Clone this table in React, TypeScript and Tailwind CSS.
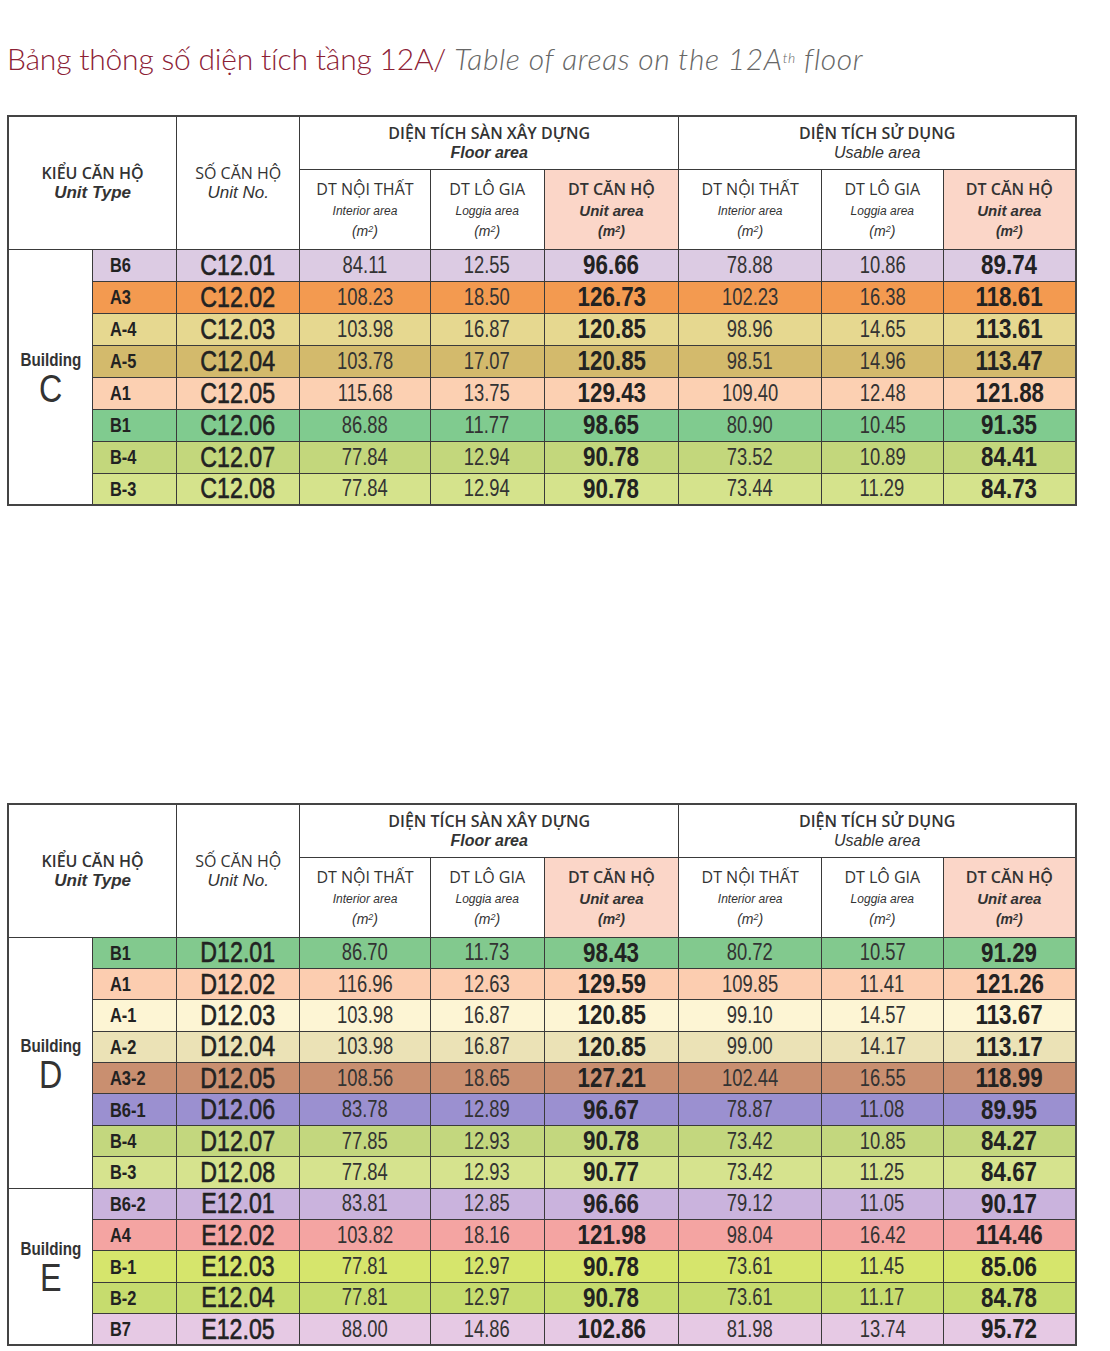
import React from "react";

type Row = {
  type: string;
  no: string;
  vals: [string, string, string, string, string, string];
  bg: string;
};

type Group = { name: string; letter: string; rows: Row[] };

// condensed look: no narrow face is installed, so Liberation Sans is squeezed
const lib = "[font-family:'Liberation_Sans','Arial',sans-serif]";
const head = "[font-family:'Open_Sans','Noto_Sans',sans-serif]";

const tableC: Group[] = [
  {
    name: "Building",
    letter: "C",
    rows: [
      { type: "B6", no: "C12.01", vals: ["84.11", "12.55", "96.66", "78.88", "10.86", "89.74"], bg: "bg-[#dccbe3]" },
      { type: "A3", no: "C12.02", vals: ["108.23", "18.50", "126.73", "102.23", "16.38", "118.61"], bg: "bg-[#f39a50]" },
      { type: "A-4", no: "C12.03", vals: ["103.98", "16.87", "120.85", "98.96", "14.65", "113.61"], bg: "bg-[#e6d890]" },
      { type: "A-5", no: "C12.04", vals: ["103.78", "17.07", "120.85", "98.51", "14.96", "113.47"], bg: "bg-[#d3ba6c]" },
      { type: "A1", no: "C12.05", vals: ["115.68", "13.75", "129.43", "109.40", "12.48", "121.88"], bg: "bg-[#fcd0b2]" },
      { type: "B1", no: "C12.06", vals: ["86.88", "11.77", "98.65", "80.90", "10.45", "91.35"], bg: "bg-[#80cb8f]" },
      { type: "B-4", no: "C12.07", vals: ["77.84", "12.94", "90.78", "73.52", "10.89", "84.41"], bg: "bg-[#c3d77c]" },
      { type: "B-3", no: "C12.08", vals: ["77.84", "12.94", "90.78", "73.44", "11.29", "84.73"], bg: "bg-[#d5e38c]" },
    ],
  },
];

const tableDE: Group[] = [
  {
    name: "Building",
    letter: "D",
    rows: [
      { type: "B1", no: "D12.01", vals: ["86.70", "11.73", "98.43", "80.72", "10.57", "91.29"], bg: "bg-[#82c98e]" },
      { type: "A1", no: "D12.02", vals: ["116.96", "12.63", "129.59", "109.85", "11.41", "121.26"], bg: "bg-[#fccdb0]" },
      { type: "A-1", no: "D12.03", vals: ["103.98", "16.87", "120.85", "99.10", "14.57", "113.67"], bg: "bg-[#fdf5d4]" },
      { type: "A-2", no: "D12.04", vals: ["103.98", "16.87", "120.85", "99.00", "14.17", "113.17"], bg: "bg-[#ebe2b6]" },
      { type: "A3-2", no: "D12.05", vals: ["108.56", "18.65", "127.21", "102.44", "16.55", "118.99"], bg: "bg-[#c98f70]" },
      { type: "B6-1", no: "D12.06", vals: ["83.78", "12.89", "96.67", "78.87", "11.08", "89.95"], bg: "bg-[#9b90d0]" },
      { type: "B-4", no: "D12.07", vals: ["77.85", "12.93", "90.78", "73.42", "10.85", "84.27"], bg: "bg-[#c3d77e]" },
      { type: "B-3", no: "D12.08", vals: ["77.84", "12.93", "90.77", "73.42", "11.25", "84.67"], bg: "bg-[#d6e38e]" },
    ],
  },
  {
    name: "Building",
    letter: "E",
    rows: [
      { type: "B6-2", no: "E12.01", vals: ["83.81", "12.85", "96.66", "79.12", "11.05", "90.17"], bg: "bg-[#cab3dd]" },
      { type: "A4", no: "E12.02", vals: ["103.82", "18.16", "121.98", "98.04", "16.42", "114.46"], bg: "bg-[#f4a4a2]" },
      { type: "B-1", no: "E12.03", vals: ["77.81", "12.97", "90.78", "73.61", "11.45", "85.06"], bg: "bg-[#d6e56c]" },
      { type: "B-2", no: "E12.04", vals: ["77.81", "12.97", "90.78", "73.61", "11.17", "84.78"], bg: "bg-[#c6dc6e]" },
      { type: "B7", no: "E12.05", vals: ["88.00", "14.86", "102.86", "81.98", "13.74", "95.72"], bg: "bg-[#e6c9e4]" },
    ],
  },
];

const cell = "border border-[#3a3a3a]";

function SubHead({ top, sub, pink }: { top: string; sub: string; pink?: boolean }) {
  return (
    <th className={`${cell} ${pink ? "bg-[#fbd6c8]" : "bg-white"} align-middle font-normal text-[#333]`}>
      <div className={`${head} text-[16px] leading-6 ${pink ? "font-semibold" : ""}`}>{top}</div>
      <div className={`${lib} italic leading-5 ${pink ? "text-[15px] font-bold" : "text-[12px]"}`}>{sub}</div>
      <div className={`${lib} italic text-[14px] leading-5 ${pink ? "font-bold" : ""}`}>
        (m<sup className="text-[9px]">2</sup>)
      </div>
    </th>
  );
}

function Sq({ children, className }: { children: React.ReactNode; className?: string }) {
  return <span className={`inline-block ${className ?? ""}`}>{children}</span>;
}

function AreaTable({ groups, rowH }: { groups: Group[]; rowH: string }) {
  return (
    <table className="w-[1070px] border-collapse border-2 border-[#444] text-[#222]">
      <colgroup>
        <col className="w-[85px]" />
        <col className="w-[84px]" />
        <col className="w-[123px]" />
        <col className="w-[131px]" />
        <col className="w-[114px]" />
        <col className="w-[135px]" />
        <col className="w-[143px]" />
        <col className="w-[122px]" />
        <col className="w-[133px]" />
      </colgroup>
      <thead className="text-[#333]">
        <tr className="h-[53px]">
          <th colSpan={2} rowSpan={2} className={`${cell} bg-white font-normal`}>
            <div className={`${head} text-[16px] font-semibold leading-5`}>KIỂU CĂN HỘ</div>
            <div className={`${lib} text-[17px] italic font-bold leading-5`}>Unit Type</div>
          </th>
          <th rowSpan={2} className={`${cell} bg-white font-normal`}>
            <div className={`${head} text-[16px] leading-5`}>SỐ CĂN HỘ</div>
            <div className={`${lib} text-[17px] italic leading-5`}>Unit No.</div>
          </th>
          <th colSpan={3} className={`${cell} bg-white font-normal`}>
            <div className={`${head} text-[16px] font-semibold leading-5`}>DIỆN TÍCH SÀN XÂY DỰNG</div>
            <div className={`${lib} text-[16px] italic font-bold leading-5`}>Floor area</div>
          </th>
          <th colSpan={3} className={`${cell} bg-white font-normal`}>
            <div className={`${head} text-[16px] font-semibold leading-5`}>DIỆN TÍCH SỬ DỤNG</div>
            <div className={`${lib} text-[16px] italic leading-5`}>Usable area</div>
          </th>
        </tr>
        <tr className="h-[80px]">
          <SubHead top="DT NỘI THẤT" sub="Interior area" />
          <SubHead top="DT LÔ GIA" sub="Loggia area" />
          <SubHead top="DT CĂN HỘ" sub="Unit area" pink />
          <SubHead top="DT NỘI THẤT" sub="Interior area" />
          <SubHead top="DT LÔ GIA" sub="Loggia area" />
          <SubHead top="DT CĂN HỘ" sub="Unit area" pink />
        </tr>
      </thead>
      <tbody className={lib}>
        {groups.map((g) =>
          g.rows.map((r, i) => (
            <tr key={r.no} className={`${rowH} ${r.bg}`}>
              {i === 0 && (
                <td rowSpan={g.rows.length} className={`${cell} bg-white text-center text-[#333]`}>
                  <Sq className="scale-x-[0.8] text-[19px] font-bold leading-5">{g.name}</Sq>
                  <div className="text-[38px] leading-8">
                    <Sq className="scale-x-[0.85]">{g.letter}</Sq>
                  </div>
                </td>
              )}
              <td className={`${cell} pl-[17px] text-[20px] font-bold leading-none`}>
                <Sq className="origin-left scale-x-[0.82]">{r.type}</Sq>
              </td>
              <td className={`${cell} text-center text-[29px] leading-none [-webkit-text-stroke:0.6px_#222]`}>
                <Sq className="scale-x-[0.8]">{r.no}</Sq>
              </td>
              <td className={`${cell} text-center text-[23px] leading-none text-[#333]`}>
                <Sq className="scale-x-[0.8]">{r.vals[0]}</Sq>
              </td>
              <td className={`${cell} text-center text-[23px] leading-none text-[#333]`}>
                <Sq className="scale-x-[0.8]">{r.vals[1]}</Sq>
              </td>
              <td className={`${cell} text-center text-[28px] font-bold leading-none`}>
                <Sq className="scale-x-[0.8]">{r.vals[2]}</Sq>
              </td>
              <td className={`${cell} text-center text-[23px] leading-none text-[#333]`}>
                <Sq className="scale-x-[0.8]">{r.vals[3]}</Sq>
              </td>
              <td className={`${cell} text-center text-[23px] leading-none text-[#333]`}>
                <Sq className="scale-x-[0.8]">{r.vals[4]}</Sq>
              </td>
              <td className={`${cell} text-center text-[28px] font-bold leading-none`}>
                <Sq className="scale-x-[0.8]">{r.vals[5]}</Sq>
              </td>
            </tr>
          ))
        )}
      </tbody>
    </table>
  );
}

export default function App() {
  return (
    <main className="min-h-[1351px] w-[1110px] bg-white pl-[7px]">
      <h1 className="pt-[38px] text-[30px] font-light leading-10 [font-family:'Lato','Open_Sans',sans-serif]">
        <span className="tracking-[-0.2px] text-[#8c2135]">Bảng thông số diện tích tầng 12A/ </span>
        <span className="italic tracking-[0.6px] text-[#666]">
          Table of areas on the 12A<sup className="text-[14px]">th</sup> floor
        </span>
      </h1>
      <div className="mt-[37px]">
        <AreaTable groups={tableC} rowH="h-[32px]" />
      </div>
      <div className="mt-[297px]">
        <AreaTable groups={tableDE} rowH="h-[31.4px]" />
      </div>
    </main>
  );
}
